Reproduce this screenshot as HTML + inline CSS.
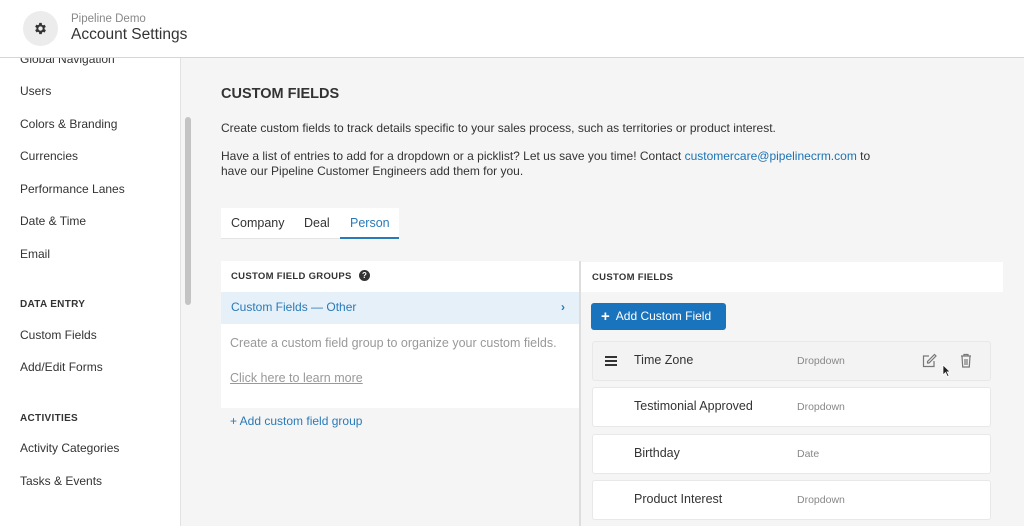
<!DOCTYPE html>
<html><head><meta charset="utf-8"><style>
*{box-sizing:border-box;margin:0;padding:0}
body{width:1024px;height:526px;overflow:hidden;background:#f5f5f5;font-family:"Liberation Sans",sans-serif;position:relative;color:#333}
.a{position:absolute}
.hdr{left:0;top:0;width:1024px;height:58px;background:#fff;border-bottom:1px solid #d6d6d6;z-index:2}
.side{left:0;top:58px;width:181px;height:468px;background:#fff;border-right:1px solid #e2e2e2;overflow:hidden}
.side div{position:absolute;left:20px;font-size:12px;color:#333}
.side .h{font-size:10px;font-weight:bold;letter-spacing:.3px}
.t{font-size:12px;color:#333}
.row{position:absolute;left:592px;width:399px;height:40px;background:#fff;border:1px solid #e8e8e8;border-radius:3px}
.row .n{position:absolute;left:41px;top:11px;font-size:12.5px;color:#333}
.row .ty{position:absolute;left:204px;top:13px;font-size:10.5px;color:#888}
</style></head><body>
<div class="a hdr">
 <div class="a" style="left:23px;top:11px;width:35px;height:35px;border-radius:50%;background:#ececec"></div>
 <svg class="a" style="left:33px;top:21px" width="15" height="15" viewBox="0 0 24 24"><path fill="#333" d="M19.4 13a7.5 7.5 0 000-2l2.1-1.6-2-3.5-2.5 1a7 7 0 00-1.7-1L15 3h-4l-.4 2.7a7 7 0 00-1.7 1l-2.5-1-2 3.5L6.6 11a7.5 7.5 0 000 2l-2.1 1.6 2 3.5 2.5-1a7 7 0 001.7 1L11 21h4l.4-2.7a7 7 0 001.7-1l2.5 1 2-3.5zM13 15.5a3.5 3.5 0 110-7 3.5 3.5 0 010 7z" transform="translate(-1 0)"/></svg>
 <div class="a" style="left:71px;top:13px;font-size:11.5px;color:#888">Pipeline Demo</div>
 <div class="a" style="left:71px;top:26px;font-size:15.5px;color:#333">Account Settings</div>
</div>
<div class="a side">
 <div style="top:-6px">Global Navigation</div>
 <div style="top:26px">Users</div>
 <div style="top:59px">Colors &amp; Branding</div>
 <div style="top:91px">Currencies</div>
 <div style="top:124px">Performance Lanes</div>
 <div style="top:156px">Date &amp; Time</div>
 <div style="top:189px">Email</div>
 <div class="h" style="top:241px">DATA ENTRY</div>
 <div style="top:270px">Custom Fields</div>
 <div style="top:302px">Add/Edit Forms</div>
 <div class="h" style="top:355px">ACTIVITIES</div>
 <div style="top:383px">Activity Categories</div>
 <div style="top:416px">Tasks &amp; Events</div>
</div>
<div class="a" style="left:185px;top:117px;width:6px;height:188px;border-radius:3px;background:#c4c4c4"></div>
<div class="a" style="left:221px;top:86px;font-size:14.5px;font-weight:bold;color:#333">CUSTOM FIELDS</div>
<div class="a t" style="left:221px;top:121px">Create custom fields to track details specific to your sales process, such as territories or product interest.</div>
<div class="a t" style="left:221px;top:149px;line-height:15px">Have a list of entries to add for a dropdown or a picklist? Let us save you time! Contact <span style="color:#1a73b5">customercare@pipelinecrm.com</span> to<br>have our Pipeline Customer Engineers add them for you.</div>
<div class="a" style="left:221px;top:208px;width:178px;height:31px;background:#fff;border-bottom:1px solid #e4e4e4"></div>
<div class="a t" style="left:231px;top:216px;font-size:12.5px">Company</div>
<div class="a t" style="left:304px;top:216px;font-size:12.5px">Deal</div>
<div class="a t" style="left:350px;top:216px;font-size:12.5px;color:#2a7ab8">Person</div>
<div class="a" style="left:340px;top:237px;width:59px;height:2px;background:#2a7ab8"></div>
<div class="a" style="left:221px;top:261px;width:358px;height:147px;background:#fff"></div>
<div class="a" style="left:231px;top:271px;font-size:9.5px;font-weight:bold;letter-spacing:.3px">CUSTOM FIELD GROUPS</div>
<div class="a" style="left:359px;top:270px;width:11px;height:11px;border-radius:50%;background:#333;color:#fff;font-size:8px;font-weight:bold;text-align:center;line-height:11px">?</div>
<div class="a" style="left:221px;top:292px;width:358px;height:32px;background:#e6f0f8"></div>
<div class="a" style="left:231px;top:300px;font-size:12px;color:#2a7ab8">Custom Fields — Other</div>
<div class="a" style="left:561px;top:300px;font-size:12px;color:#2a7ab8;font-weight:bold">›</div>
<div class="a" style="left:230px;top:336px;font-size:12.5px;color:#999">Create a custom field group to organize your custom fields.</div>
<div class="a" style="left:230px;top:371px;font-size:12.5px;color:#999;text-decoration:underline">Click here to learn more</div>
<div class="a" style="left:230px;top:414px;font-size:12px;color:#2a7ab8">+ Add custom field group</div>
<div class="a" style="left:579px;top:261px;width:2px;height:265px;background:#ddd"></div>
<div class="a" style="left:581px;top:262px;width:422px;height:30px;background:#fff"></div>
<div class="a" style="left:592px;top:272px;font-size:9.5px;font-weight:bold;letter-spacing:.3px">CUSTOM FIELDS</div>
<div class="a" style="left:591px;top:303px;width:135px;height:27px;background:#1a73bd;border-radius:3px;color:#fff;font-size:12px;line-height:27px;padding-left:10px"><b style="font-size:15px;vertical-align:-1px">+</b>&nbsp; Add Custom Field</div>
<div class="row" style="top:341px;background:#f3f3f3">
 <div class="a" style="left:12px;top:14px;width:12px;height:2px;background:#333;box-shadow:0 4px 0 #333,0 8px 0 #333"></div>
 <div class="n">Time Zone</div><div class="ty">Dropdown</div>
 <svg class="a" style="left:328px;top:11px" width="16" height="16" viewBox="0 0 16 16" fill="none" stroke="#777" stroke-width="1.2"><path d="M8 3H2.5v10.5H13V8"/><path d="M13.5 1.5l1.5 1.5-7 7H6.5V8.5z"/></svg>
 <svg class="a" style="left:367px;top:11px" width="12" height="15" viewBox="0 0 12 15" fill="none" stroke="#777" stroke-width="1.2"><path d="M1 3h10M4 3V1.5h4V3M2 3l.7 11h6.6L10 3M5 6v6M7 6v6"/></svg>
 <svg class="a" style="left:349px;top:22px" width="10" height="14" viewBox="0 0 10 14"><path d="M1 1v10l2.5-2.5 2 4 1.5-.7-2-4H8z" fill="#222" stroke="#fff" stroke-width=".7"/></svg>
</div>
<div class="row" style="top:387px"><div class="n">Testimonial Approved</div><div class="ty">Dropdown</div></div>
<div class="row" style="top:434px"><div class="n">Birthday</div><div class="ty">Date</div></div>
<div class="row" style="top:480px"><div class="n">Product Interest</div><div class="ty">Dropdown</div></div>
</body></html>
